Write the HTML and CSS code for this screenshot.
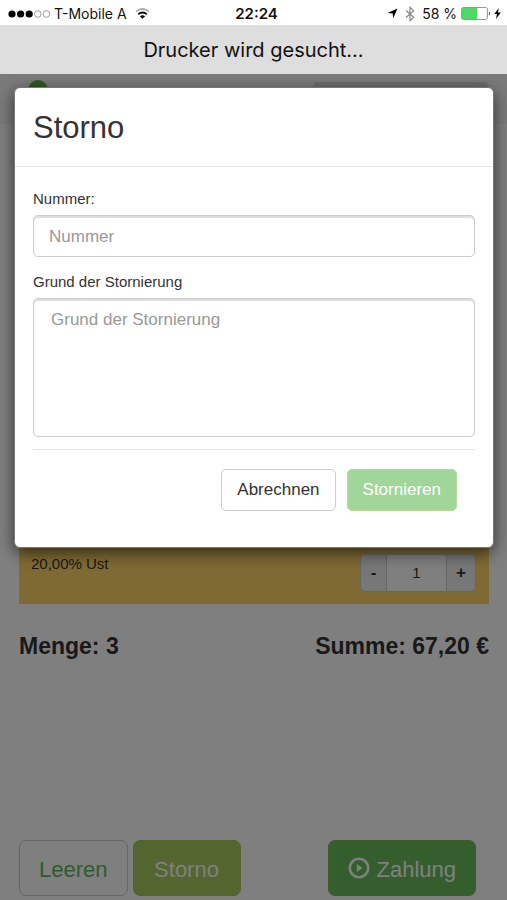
FILE: index.html
```html
<!DOCTYPE html>
<html lang="de">
<head>
<meta charset="utf-8">
<meta name="viewport" content="width=device-width, initial-scale=1">
<title>Storno</title>
<link rel="stylesheet" href="styles.css">
</head>
<body>
<header class="status">
  <div class="status-side">
    <svg class="signal" width="43" height="10" viewBox="0 0 43 10" aria-hidden="true">
      <g fill="#000"><circle cx="4" cy="5" r="3.6"/><circle cx="12.6" cy="5" r="3.6"/><circle cx="21.2" cy="5" r="3.6"/></g>
      <g fill="none" stroke="#888" stroke-width="0.8"><circle cx="29.8" cy="5" r="3.3"/><circle cx="38.4" cy="5" r="3.3"/></g>
    </svg>
    <span>T-Mobile A</span>
    <svg class="wifi" width="15" height="11" viewBox="0 0 15 11" aria-hidden="true">
      <path d="M1 3.6Q7.5-1.6 14 3.6" fill="none" stroke="#aaa" stroke-width="1.7"/>
      <path d="M3.3 6.2Q7.5 2.8 11.7 6.2" fill="none" stroke="#000" stroke-width="1.8"/>
      <path d="M7.5 10.8L4.9 8.2Q7.5 6.2 10.1 8.2Z" fill="#000"/>
    </svg>
  </div>
  <time class="clock">22:24</time>
  <div class="status-side status-right">
    <svg width="11" height="11" viewBox="0 0 11 11" aria-hidden="true"><path d="M10.5.5L6.2 10.2 5.7 5.4.5 5Z"/></svg>
    <svg class="bluetooth" width="10" height="16" viewBox="0 0 10 16" aria-hidden="true"><path d="M1 4.5L8.7 11.2 5 14.6V1.4L8.7 4.8 1 11.5" fill="none" stroke="#888" stroke-width="1.2"/></svg>
    <span>58 %</span>
    <svg class="battery" width="30" height="13" viewBox="0 0 30 13" aria-hidden="true"><rect x=".5" y=".5" width="26" height="12" rx="1.8" fill="#fff" stroke="#999"/><path d="M1 1H16V12H1Z" fill="#4cd964"/><path d="M28 4.5Q30 6.5 28 8.5Z" fill="#333"/></svg>
    <svg width="7" height="11" viewBox="0 0 7 11" aria-hidden="true"><path d="M4.8 0L.3 6.1H3L1.9 11 6.8 4.6H3.9Z"/></svg>
  </div>
</header>
<div class="notice" role="status">Drucker wird gesucht...</div>
<div class="stage">
  <div class="page">
    <nav class="navbar"><span class="dot"></span><span class="search"></span></nav>
    <main class="content">
      <section class="item">
        <span>20,00% Ust</span>
        <div class="stepper">
          <button type="button" aria-label="Weniger">-</button>
          <input type="text" value="1" aria-label="Anzahl">
          <button type="button" aria-label="Mehr">+</button>
        </div>
      </section>
      <div class="totals"><span>Menge: 3</span><span>Summe: 67,20 €</span></div>
    </main>
    <footer class="actions">
      <button type="button" class="big clear">Leeren</button>
      <button type="button" class="big cancel">Storno</button>
      <button type="button" class="big pay">
        <svg width="22" height="26" viewBox="0 0 22 26" aria-hidden="true"><circle cx="11" cy="11" r="9.2" fill="none" stroke="currentColor" stroke-width="2.6"/><path d="M8.8 7V15L14.6 11Z" fill="currentColor"/></svg>
        <span>Zahlung</span>
      </button>
    </footer>
  </div>
  <div class="backdrop"></div>
  <form class="modal" role="dialog" aria-labelledby="title">
    <h1 id="title">Storno</h1>
    <div class="modal-body">
      <label for="number">Nummer:</label>
      <input id="number" class="field" type="text" placeholder="Nummer">
      <label for="reason">Grund der Stornierung</label>
      <textarea id="reason" class="field" placeholder="Grund der Stornierung"></textarea>
      <div class="modal-actions">
        <button type="button" class="btn">Abrechnen</button>
        <button type="submit" class="btn confirm">Stornieren</button>
      </div>
    </div>
  </form>
</div>
</body>
</html>
```
FILE: styles.css
```css
* {
  box-sizing: border-box;
}

body {
  margin: 0;
  min-height: 100vh;
  display: flex;
  flex-direction: column;
  font: 15px/20px "Liberation Sans", Helvetica, Arial, sans-serif;
  color: #333;
  background: #fff;
}

button,
input,
textarea {
  font: inherit;
  color: inherit;
  margin: 0;
}

svg {
  display: block;
  flex: none;
}

.status {
  display: grid;
  grid-template-columns: 1fr auto 1fr;
  align-items: center;
  height: 25px;
  padding: 2px 6px 0 8px;
  font: 14px/20px Inter, sans-serif;
  color: #111;
}

.status-side {
  display: flex;
  align-items: center;
  gap: 4px;
  white-space: nowrap;
}

.status-right {
  justify-content: flex-end;
}

.signal {
  margin-right: -1px;
}

.wifi {
  margin-left: 4px;
}

.bluetooth {
  margin: 0 3px;
}

.battery {
  margin-right: -1px;
}

.clock {
  padding-left: 4px;
  font-size: 15px;
  font-weight: 600;
}

.notice {
  height: 49px;
  background: #dedede;
  color: #111;
  font: 20px/50px Inter, sans-serif;
  text-align: center;
}

.stage {
  position: relative;
  flex: 1;
  display: flex;
}

.page {
  flex: 1;
  display: flex;
  flex-direction: column;
}

.navbar {
  display: flex;
  align-items: flex-start;
  justify-content: space-between;
  height: 50px;
  padding: 6px 18px 0 28px;
  background: #f4f4f4;
}

.dot {
  width: 20px;
  height: 20px;
  border-radius: 50%;
  background: #5fae40;
}

.search {
  width: 176px;
  height: 34px;
  margin-top: 2px;
  border-radius: 5px;
  background: #d8d8d8;
}

.content {
  padding: 16px 18px 0 19px;
}

.item {
  display: flex;
  justify-content: space-between;
  height: 464px;
  padding: 414px 13px 12px 12px;
  background: #ffd569;
}

.stepper {
  display: flex;
  width: 116px;
  height: 38px;
}

.stepper button {
  width: 27px;
  padding: 0;
  border: 1px solid #ccc;
  background: #eee;
  font-size: 17px;
  font-weight: bold;
}

.stepper button:first-child {
  border-radius: 5px 0 0 5px;
}

.stepper button:last-child {
  width: 30px;
  border-radius: 0 5px 5px 0;
}

.stepper input {
  flex: 1;
  min-width: 0;
  padding: 0;
  border: 1px solid #ccc;
  border-width: 1px 0;
  background: #fff;
  text-align: center;
}

.totals {
  display: flex;
  justify-content: space-between;
  padding-top: 26px;
  font-size: 23px;
  font-weight: bold;
  line-height: 32px;
}

.actions {
  display: flex;
  gap: 5px;
  margin-top: auto;
  padding: 0 31px 4px 19px;
}

.big {
  display: flex;
  align-items: center;
  justify-content: center;
  gap: 6px;
  min-width: 108px;
  height: 56px;
  padding: 3px 19px 0;
  border: 1px solid #ccc;
  border-radius: 7px;
  background: #fff;
  color: #fff;
  font-size: 22px;
}

.clear {
  color: #5cb85c;
}

.cancel {
  border-color: #a8cc60;
  background: #a8cc60;
}

.pay {
  margin-left: auto;
  border-color: #7ab84c;
  background: #6bbd5f;
}

.backdrop {
  position: absolute;
  inset: 0;
  background: rgb(0 0 0 / 50%);
}

.modal {
  position: absolute;
  top: 13px;
  left: 14px;
  right: 13px;
  border: 1px solid #777;
  border-radius: 6px;
  background: #fff;
  box-shadow: 0 5px 16px rgb(0 0 0 / 60%);
}

.modal h1 {
  margin: 0;
  padding: 21px 18px 19px;
  border-bottom: 1px solid #e5e5e5;
  font-size: 31px;
  line-height: 38px;
  font-weight: normal;
}

.modal-body {
  padding: 22px 18px 36px;
}

.modal label {
  display: block;
  margin-bottom: 6px;
}

.field {
  display: block;
  width: 100%;
  height: 42px;
  margin-bottom: 15px;
  padding: 1px 15px 0;
  border: 1px solid #ccc;
  border-radius: 5px;
  background: #fff;
  box-shadow: inset 0 2px 1px #ddd;
  font-size: 17px;
}

.field::placeholder {
  color: #999;
  opacity: 1;
}

textarea.field {
  height: 139px;
  margin-bottom: 12px;
  padding: 10px 17px;
  line-height: 22px;
  resize: none;
}

.modal-actions {
  display: flex;
  justify-content: flex-end;
  gap: 11px;
  padding: 19px 18px 0 0;
  border-top: 1px solid #e5e5e5;
}

.btn {
  height: 42px;
  padding: 0 15px;
  border: 1px solid #ccc;
  border-radius: 5px;
  background: #fff;
  font-size: 17px;
}

.confirm {
  border-color: #b5dc94;
  background: #a0d699;
  color: #fff;
}
```
